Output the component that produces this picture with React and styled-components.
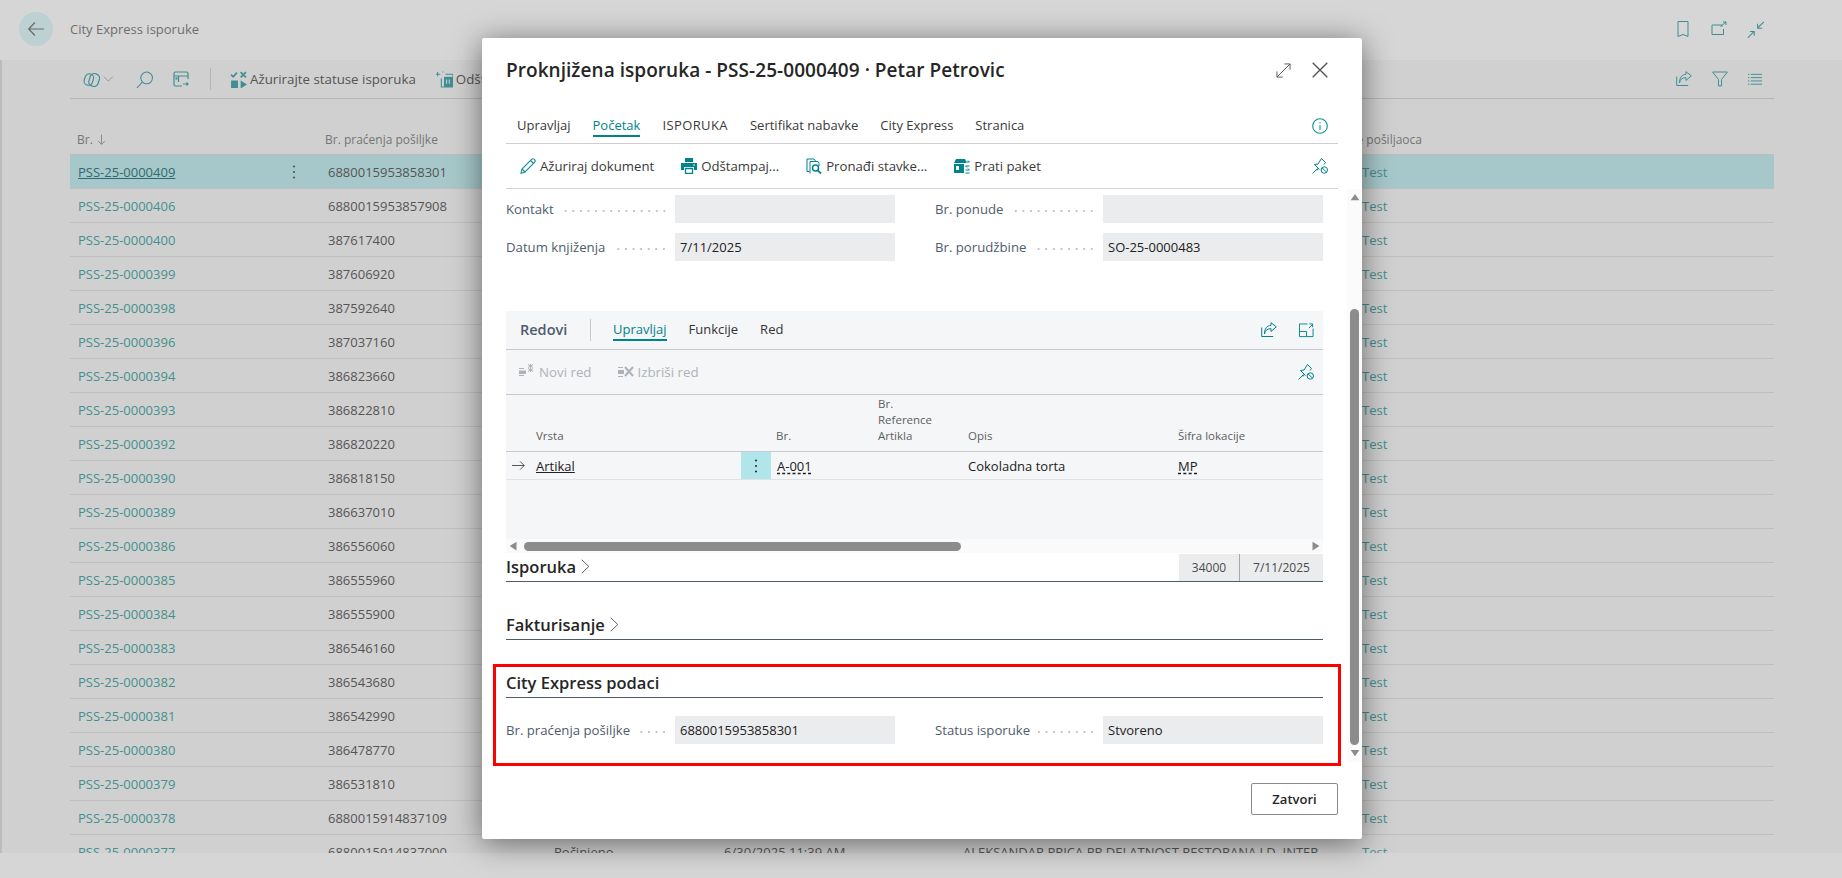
import React from 'react';
import styled, { createGlobalStyle } from 'styled-components';

const GlobalStyle = createGlobalStyle`
  html, body { margin: 0; padding: 0; height: 100%; overflow: hidden; }
  body { font-family: "Open Sans", "Noto Sans", sans-serif; font-size: 13px; color: #212121; }
  * { box-sizing: border-box; }
`;

const rows = [
  ['PSS-25-0000409', '6880015953858301'],
  ['PSS-25-0000406', '6880015953857908'],
  ['PSS-25-0000400', '387617400'],
  ['PSS-25-0000399', '387606920'],
  ['PSS-25-0000398', '387592640'],
  ['PSS-25-0000396', '387037160'],
  ['PSS-25-0000394', '386823660'],
  ['PSS-25-0000393', '386822810'],
  ['PSS-25-0000392', '386820220'],
  ['PSS-25-0000390', '386818150'],
  ['PSS-25-0000389', '386637010'],
  ['PSS-25-0000386', '386556060'],
  ['PSS-25-0000385', '386555960'],
  ['PSS-25-0000384', '386555900'],
  ['PSS-25-0000383', '386546160'],
  ['PSS-25-0000382', '386543680'],
  ['PSS-25-0000381', '386542990'],
  ['PSS-25-0000380', '386478770'],
  ['PSS-25-0000379', '386531810'],
  ['PSS-25-0000378', '6880015914837109'],
  ['PSS-25-0000377', '6880015914837000', 'Počinjeno', '6/30/2025 11:39 AM', 'ALEKSANDAR PRICA PR DELATNOST RESTORANA LD. INTER'],
];

const Page = styled.div`
  position: relative;
  width: 1842px;
  height: 878px;
  display: flex;
  flex-direction: column;
  background: #d0d0d0;
  overflow: hidden;
`;

const TopBar = styled.header`
  height: 60px;
  flex: none;
  background: #d6d6d6;
  display: flex;
  align-items: center;
  padding: 0 78px 2px 19px;
`;

const BackButton = styled.div`
  width: 34px;
  height: 34px;
  border-radius: 50%;
  background: #bdd0d2;
  display: flex;
  align-items: center;
  justify-content: center;
`;

const PageTitle = styled.div`
  margin-left: 17px;
  font-size: 13px;
  color: #6f6f6f;
  flex: 1;
`;

const IconRow = styled.div`
  display: flex;
  align-items: center;
  gap: ${p => p.$gap || 20}px;
`;

const Main = styled.div`
  flex: 1;
  min-height: 0;
  border-left: 2px solid #bcbcbc;
  padding: 0 68px;
  overflow: hidden;
`;

const ListToolbar = styled.div`
  height: 39px;
  display: flex;
  align-items: center;
  border-bottom: 1px solid #b5b5b5;
  padding: 0 11px 0 13px;
`;

const ToolItem = styled.div`
  display: flex;
  align-items: center;
  gap: 3px;
  font-size: 13.3px;
  color: #555;
  margin-left: ${p => p.$ml || 0}px;
  margin-right: ${p => p.$mr || 0}px;
  white-space: nowrap;
`;

const ToolSep = styled.div`
  width: 1px;
  height: 22px;
  background: #b5b5b5;
  margin: 0 19px 0 21px;
`;

const Spacer = styled.div`
  flex: 1;
`;

const ListGrid = styled.div`
  display: grid;
  grid-template-columns: 195px 56px 226px 170px 239px 398px 420px;
`;

const ListHead = styled(ListGrid)`
  height: 56px;
  align-items: end;
  border-bottom: 1px solid #bcbcbc;
  padding-bottom: 6px;
  font-size: 12px;
  color: #757575;
`;

const HeadCell = styled.div`
  padding-left: ${p => p.$pl ?? 7}px;
  margin-left: ${p => p.$ml || 0}px;
  white-space: nowrap;
  display: flex;
  align-items: center;
  gap: 3px;
`;

const ListRow = styled(ListGrid)`
  height: 34px;
  align-items: center;
  border-bottom: 1px solid #bfbfbf;
  background: ${p => (p.$selected ? '#a7c8ca' : 'transparent')};
  font-size: 13px;
  color: #555;
`;

const Cell = styled.div`
  padding-left: 7px;
  white-space: nowrap;
`;

const DocLink = styled.div`
  padding-left: 8px;
  white-space: nowrap;
  color: ${p => (p.$selected ? '#2e6b70' : '#43908f')};
  text-decoration: ${p => (p.$selected ? 'underline' : 'none')};
`;

const DotsCell = styled(Cell)`
  padding-left: 27px;
  display: flex;
  align-items: center;
`;

const BottomBar = styled.div`
  height: 25px;
  flex: none;
  background: #d6d6d6;
`;

const Modal = styled.section`
  position: absolute;
  left: 482px;
  top: 38px;
  width: 880px;
  height: 801px;
  background: #fff;
  border-radius: 2px;
  box-shadow: 0 4px 30px rgba(0, 0, 0, 0.5);
  display: flex;
  flex-direction: column;
`;

const ModalHead = styled.div`
  height: 70px;
  flex: none;
  display: flex;
  align-items: center;
  padding: 0 34px 6px 24px;
`;

const ModalTitle = styled.h1`
  flex: 1;
  margin: 0;
  font-size: 19px;
  letter-spacing: 0.05px;
  font-weight: 600;
  color: #262626;
`;

const TabBar = styled.div`
  height: 36px;
  flex: none;
  margin: 0 24px;
  padding: 0 10px 0 11px;
  border-bottom: 1px solid #cfcfd3;
  display: flex;
  align-items: center;
  gap: 22px;
  font-size: 13px;
  color: #3a3a3a;
`;

const Tab = styled.div`
  height: 22px;
  line-height: 20px;
  white-space: nowrap;
  color: ${p => (p.$active ? '#00838a' : 'inherit')};
  border-bottom: 2px solid ${p => (p.$active ? '#00838a' : 'transparent')};
`;

const CapsTab = styled(Tab)`
  letter-spacing: 0.4px;
`;

const ActionBar = styled.div`
  height: 45px;
  flex: none;
  margin: 0 24px;
  padding: 0 10px 0 14px;
  border-bottom: 1px solid #d4d4d8;
  display: flex;
  align-items: center;
  gap: 27px;
  font-size: 13.2px;
  color: #3a3a3a;
`;

const Action = styled.div`
  display: flex;
  align-items: center;
  gap: 4px;
  white-space: nowrap;
  color: ${p => (p.$disabled ? '#aeb2b8' : 'inherit')};
`;

const ScrollArea = styled.div`
  flex: 1;
  min-height: 0;
  display: flex;
  padding-left: 24px;
`;

const Content = styled.div`
  width: 817px;
  flex: none;
`;

const FieldGrid = styled.div`
  display: grid;
  grid-template-columns: 389px 388px;
  column-gap: 40px;
  row-gap: 10px;
  padding-top: ${p => p.$top || 0}px;
`;

const Field = styled.div`
  display: flex;
  align-items: center;
  height: 28px;
`;

const FieldLabel = styled.div`
  flex: 1;
  display: flex;
  align-items: center;
  font-size: 13.2px;
  color: #505c6d;
  white-space: nowrap;
  padding-right: 7px;
`;

const Leader = styled.span`
  flex: 1;
  height: 2px;
  margin: 3px 0 0 8px;
  background: radial-gradient(circle, #c4c4c4 0.9px, transparent 1px) right center / 7.6px 2px repeat-x;
`;

const FieldValue = styled.div`
  width: 220px;
  flex: none;
  height: 100%;
  background: #ebecee;
  padding: 0 5px;
  display: flex;
  align-items: center;
  font-size: 13px;
  color: #212121;
`;

const LinesPart = styled.div`
  margin-top: 50px;
  background: #f5f6f8;
`;

const LinesHead = styled.div`
  height: 39px;
  border-bottom: 1px solid #c8c9cc;
  display: flex;
  align-items: center;
  padding: 0 9px 0 14px;
  gap: 22px;
  font-size: 13px;
  color: #333;
`;

const LinesTitle = styled.div`
  font-size: 14.5px;
  font-weight: 600;
  color: #505c6d;
  height: 22px;
  line-height: 22px;
  border-right: 1px solid #c8c9cc;
  width: 71px;
  flex: none;
  white-space: nowrap;
`;

const LinesActions = styled.div`
  height: 45px;
  border-bottom: 1px solid #c8c9cc;
  display: flex;
  align-items: center;
  padding: 0 9px 0 13px;
  gap: 26px;
  font-size: 13.3px;
`;

const LinesGrid = styled.div`
  display: grid;
  grid-template-columns: 30px 205px 30px 107px 90px 210px 145px;
`;

const LinesGridHead = styled(LinesGrid)`
  height: 57px;
  align-items: end;
  border-bottom: 1px solid #c8c9cc;
  font-size: 11.5px;
  line-height: 16px;
  color: #5e5e5e;
  padding-bottom: 7px;
`;

const LinesRow = styled(LinesGrid)`
  height: 28px;
  align-items: center;
  border-bottom: 1px solid #e1e2e5;
  font-size: 13px;
  color: #212121;
`;

const LineCell = styled.div`
  white-space: nowrap;
  padding-left: ${p => p.$pl || 0}px;
  text-decoration: ${p => (p.$link ? 'underline' : 'none')};
`;

const Lookup = styled.span`
  text-decoration: underline dashed;
  text-underline-offset: 2px;
`;

const MenuCell = styled.div`
  height: 27px;
  background: #b0e6ea;
  display: flex;
  align-items: center;
  justify-content: center;
`;

const LinesFiller = styled.div`
  height: 59px;
`;

const HScroll = styled.div`
  height: 14px;
  background: #fafafa;
  display: flex;
  align-items: center;
  padding: 0 3px;
`;

const HThumb = styled.div`
  width: 437px;
  height: 9px;
  border-radius: 5px;
  background: #8c8c8c;
  margin-right: auto;
  margin-left: 5px;
`;

const SectionHead = styled.div`
  display: flex;
  align-items: flex-end;
  height: ${p => p.$h || 28}px;
  border-bottom: 1px solid #4f5a6b;
  justify-content: space-between;
`;

const SectionTitle = styled.div`
  display: flex;
  align-items: center;
  gap: 2px;
  font-size: 16.5px;
  font-weight: 600;
  color: #262626;
  white-space: nowrap;
  padding-bottom: 3px;
`;

const CutCells = styled.div`
  display: flex;
  height: 27px;
`;

const CutCell = styled.div`
  background: #ebecee;
  height: 100%;
  width: ${p => p.$w}px;
  display: flex;
  align-items: center;
  justify-content: center;
  font-size: 12px;
  color: #4a4a4a;
  border-left: ${p => (p.$line ? '1px solid #a8a8a8' : '0')};
`;

const CitySection = styled.div`
  position: relative;
  margin-top: 25px;
`;

const Highlight = styled.div`
  position: absolute;
  left: -13px;
  right: -18px;
  top: -1px;
  height: 102px;
  border: 3px solid #f00;
  pointer-events: none;
`;

const ScrollTrack = styled.div`
  width: 15px;
  flex: none;
  margin-left: 24px;
  background: #fbfbfb;
  display: flex;
  flex-direction: column;
  align-items: center;
  padding: 3px 0 4px;
`;

const VThumb = styled.div`
  width: 9px;
  flex: 1;
  margin: 107px 0 3px;
  border-radius: 5px;
  background: #8c8c8c;
`;

const ModalFoot = styled.div`
  flex: none;
  height: 77px;
  display: flex;
  justify-content: flex-end;
  padding: 21px 24px 0 0;
`;

const CloseButton = styled.button`
  width: 87px;
  height: 32px;
  background: #fff;
  border: 1px solid #8a8a8a;
  border-radius: 2px;
  font-family: inherit;
  font-size: 13px;
  font-weight: 600;
  color: #262626;
  padding: 0;
`;

const Svg = styled.svg.attrs(p => ({
  viewBox: p.viewBox || '0 0 16 16',
  width: p.$width || p.$s || 16,
  height: p.$s || 16,
  fill: 'none',
  stroke: p.$c || '#00838a',
  strokeWidth: p.$w || 1,
}))`
  flex: none;
  display: block;
`;

const dim = '#3f8f92';

const ArrowLeftIcon = () => (
  <Svg $c="#6a6a6a" $s={18} $w={1.1}>
    <path d="M1.5 8H15M7 2.2 1.5 8 7 13.8" />
  </Svg>
);
const BookmarkIcon = () => (
  <Svg $c={dim}><path d="M3 .5h10v15L8 13.5l-5 2z" /></Svg>
);
const OpenIcon = () => (
  <Svg $c={dim}><path d="M11 5.5V4H1v9.5h11.5V8M9.5 5.5 15 1M12 1h3v3" /></Svg>
);
const CollapseIcon = () => (
  <Svg $c={dim} $s={17}><path d="M9.8 6.8 15.8.8M10 2.6v4.2h4.2M.8 15.8l6-6M2.8 9.8h4v4" /></Svg>
);
const ShareIcon = ({ c = dim }) => (
  <Svg $c={c}><path d="M.7 5.5v9h11.5M3.5 12c.4-3.5 3-5.500 6.500-5.300V9.500l5.300-4.700L10 .7v2.600C6 3.300 3.300 7 3.500 12z" /></Svg>
);
const FilterIcon = () => (
  <Svg $c={dim}><path d="M.6 1h14.800L9.500 8.500V15h-3V8.500z" /></Svg>
);
const ListIcon = () => (
  <Svg $c={dim} $s={15}><path d="M0 2.5h1.5M3 2.5h12M0 6h1.5M3 6h12M0 9.5h1.5M3 9.5h12M0 13h1.5M3 13h12" /></Svg>
);
const CopilotIcon = () => (
  <Svg $c={dim} $s={17} $w={1.1}>
    <rect x="1.5" y="2.5" width="8" height="11" rx="4" transform="rotate(18 5.5 8)" />
    <rect x="6" y="2.5" width="9" height="12" rx="4" transform="rotate(18 10.5 8.5)" />
  </Svg>
);
const ChevronDown = () => (
  <Svg $c="#8a8a8a" $s={13}><path d="M1 4.5 6.5 10 12 4.5" /></Svg>
);
const SearchIcon = () => (
  <Svg $c={dim} $s={17}><circle cx="10" cy="6.5" r="5.5" /><path d="M6 10.5.8 16" /></Svg>
);
const LayoutIcon = () => (
  <Svg $c={dim} $w={1.2}>
    <path d="M9 15H2.500A1.500 1.500 0 0 1 1 13.500v-11A1.500 1.500 0 0 1 2.500 1h11A1.500 1.500 0 0 1 15 2.500V8" />
    <path d="M1 5h14M5.5 5v6" />
    <path d="M2.500 6.500h2v2h-2z" fill={dim} stroke="none" />
    <path d="M10 13h5M13.5 11.500 15 13l-1.500 1.500" />
  </Svg>
);
const UpdateIcon = () => (
  <Svg $c={dim} $s={17}>
    <path d="M1 3.500 3 5.500 6.500 1.500" strokeWidth="1.6" />
    <path d="M10 1l5 5M15 1l-5 5" strokeWidth="1.6" />
    <path d="M1 9h6.500v7.500H1zM10 9l6 3.700-6 3.800z" fill={dim} stroke="none" />
  </Svg>
);
const ExportListIcon = () => (
  <Svg $c={dim} $s={17}>
    <path d="M0 3h4M1.500 1v4M6 1h1M9 3h7v12H5V7" />
    <path d="M7.500 5.500h8.500V15H7.500z" fill={dim} stroke="none" />
    <path d="M10 8v4M12.500 8v4" stroke="#d0d0d0" />
  </Svg>
);
const VDots = ({ c = '#555' }) => (
  <Svg viewBox="0 0 4 16" $width={4} $c="none">
    <circle cx="2" cy="2.5" r="1.1" fill={c} />
    <circle cx="2" cy="8" r="1.1" fill={c} />
    <circle cx="2" cy="13.5" r="1.1" fill={c} />
  </Svg>
);
const SortDown = () => (
  <Svg $c="#757575" $s={11} $w={1.1}><path d="M8 1v14M3 10l5 5 5-5" /></Svg>
);
const ExpandIcon = () => (
  <Svg $c="#555" $s={15}><path d="M1 15 15 1M9 1h6v6M1 9v6h6" /></Svg>
);
const CloseIcon = () => (
  <Svg $c="#555" $w={1.4}><path d="M.7.7 15.300 15.300M15.300.7.7 15.300" /></Svg>
);
const InfoIcon = () => (
  <Svg $c="#138f96" $w={1.1}>
    <circle cx="8" cy="8" r="7.3" />
    <path d="M8 7v5" />
    <circle cx="8" cy="4.8" r=".7" fill="#138f96" stroke="none" />
  </Svg>
);
const PinIcon = () => (
  <Svg>
    <path d="M.5 15.500 5.500 10.500M2.500 6.500l3.500-.5 3.500-5.500 4 4L12 6.500M2.500 6.500l5 5M5 12.500l1.300-2" />
    <circle cx="12.300" cy="12" r="3.200" />
    <path d="M10 9.800l4.600 4.400" />
  </Svg>
);
const PencilIcon = () => (
  <Svg $c="#138f96" $w={1.1}>
    <path d="M1 15.300 2 11 11.800 1.200a1.500 1.500 0 0 1 2.200 0l.8.8a1.500 1.500 0 0 1 0 2.200L5 14z" />
    <path d="M2 11l3 3M10.500 2.500l3 3" />
  </Svg>
);
const PrinterIcon = () => (
  <Svg $c="none">
    <path d="M4 0h8v4H4zM0 5h16v7h-3V9H3v3H0z" fill="#00838a" />
    <path d="M4.500 10.500h7v5h-7z" stroke="#00838a" strokeWidth="1.3" />
    <circle cx="13" cy="7" r=".8" fill="#fff" />
  </Svg>
);
const FindDocIcon = () => (
  <Svg>
    <path d="M3.500 13.500H1V1h7l1.500 2M4 15.500V3.500h8l1 1.500v3" />
    <circle cx="9.500" cy="10" r="3" strokeWidth="1.5" />
    <path d="M11.500 12.300 15 15.500" strokeWidth="1.8" />
  </Svg>
);
const PackageIcon = () => (
  <Svg>
    <path d="M0 5 2 1h9l1 2v2zM0 6h10v9H0z" fill="#00838a" stroke="none" />
    <path d="M2 8h3v4H2z" fill="#fff" stroke="none" />
    <path d="M11.500 4h4l-1.500-1.500M11.500 8h4M11.500 8l1.500 1.500M11.500 12h4l-1.500-1.500M11.500 15h4" />
  </Svg>
);
const NewLineIcon = () => (
  <Svg $c="#aeb2b8">
    <path d="M0 4.500h5M0 11.500h5" />
    <path d="M0 6.500h7V10H0z" fill="#aeb2b8" stroke="none" />
    <path d="M9 3.500l5-3M9 .5l5 3M11.500 0v4M9 7.500l5-3M9 4.500l5 3M11.500 4v4" />
  </Svg>
);
const DeleteLineIcon = () => (
  <Svg $c="#aeb2b8">
    <path d="M0 3.500h5M0 12.500h5" />
    <path d="M0 6h6v4H0z" fill="#aeb2b8" stroke="none" />
    <path d="M7 3l8 9M15 3l-8 9" strokeWidth="2" />
  </Svg>
);
const PopOutIcon = () => (
  <Svg $s={15}>
    <path d="M15 6v8.500H.5V1H9M.5 9H8v5.500M10.500 5.500 14.500 1.500M11 1h3.500v3.500" />
  </Svg>
);
const ArrowRightIcon = () => (
  <Svg $c="#333" $s={13}><path d="M0 8h15M10 3l5 5-5 5" /></Svg>
);
const SectionChevron = () => (
  <Svg $c="#555" $s={15}><path d="M4 .8 11.500 8 4 15.200" /></Svg>
);
const TriLeft = () => <Svg $c="none" $s={10}><path d="M12 1v14L1 8z" fill="#8c8c8c" /></Svg>;
const TriRight = () => <Svg $c="none" $s={10}><path d="M4 1v14l11-7z" fill="#8c8c8c" /></Svg>;
const TriUp = () => <Svg $c="none" $s={10}><path d="M1 13 8 3l7 10z" fill="#8c8c8c" /></Svg>;
const TriDown = () => <Svg $c="none" $s={10}><path d="M1 3h14L8 13z" fill="#8c8c8c" /></Svg>;

const DataField = ({ label, value }) => (
  <Field>
    <FieldLabel>{label}<Leader /></FieldLabel>
    <FieldValue>{value}</FieldValue>
  </Field>
);

const App = () => (
  <Page>
    <GlobalStyle />
    <TopBar>
      <BackButton><ArrowLeftIcon /></BackButton>
      <PageTitle>City Express isporuke</PageTitle>
      <IconRow>
        <BookmarkIcon />
        <OpenIcon />
        <CollapseIcon />
      </IconRow>
    </TopBar>
    <Main>
      <ListToolbar>
        <CopilotIcon />
        <ToolItem $ml={3}><ChevronDown /></ToolItem>
        <ToolItem $ml={20} $mr={20}><SearchIcon /></ToolItem>
        <LayoutIcon />
        <ToolSep />
        <ToolItem $mr={20}><UpdateIcon />Ažurirajte statuse isporuka</ToolItem>
        <ToolItem><ExportListIcon />Odštampaj</ToolItem>
        <Spacer />
        <IconRow>
          <ShareIcon />
          <FilterIcon />
          <ListIcon />
        </IconRow>
      </ListToolbar>
      <ListHead>
        <HeadCell>Br. <SortDown /></HeadCell>
        <HeadCell />
        <HeadCell $pl={4}>Br. praćenja pošiljke</HeadCell>
        <HeadCell />
        <HeadCell />
        <HeadCell />
        <HeadCell $ml={-19}>Ime pošiljaoca</HeadCell>
      </ListHead>
      {rows.map(([no, track, status, date, name], i) => (
        <ListRow key={no} $selected={i === 0}>
          <DocLink $selected={i === 0}>{no}</DocLink>
          {i === 0 ? <DotsCell><VDots /></DotsCell> : <Cell />}
          <Cell>{track}</Cell>
          <Cell>{status}</Cell>
          <Cell>{date}</Cell>
          <Cell>{name}</Cell>
          <DocLink>Test</DocLink>
        </ListRow>
      ))}
    </Main>
    <BottomBar />

    <Modal>
      <ModalHead>
        <ModalTitle>Proknjižena isporuka - PSS-25-0000409 · Petar Petrovic</ModalTitle>
        <IconRow $gap={21}>
          <ExpandIcon />
          <CloseIcon />
        </IconRow>
      </ModalHead>
      <TabBar>
        <Tab>Upravljaj</Tab>
        <Tab $active>Početak</Tab>
        <CapsTab>ISPORUKA</CapsTab>
        <Tab>Sertifikat nabavke</Tab>
        <Tab>City Express</Tab>
        <Tab>Stranica</Tab>
        <Spacer />
        <InfoIcon />
      </TabBar>
      <ActionBar>
        <Action><PencilIcon />Ažuriraj dokument</Action>
        <Action><PrinterIcon />Odštampaj...</Action>
        <Action><FindDocIcon />Pronađi stavke...</Action>
        <Action><PackageIcon />Prati paket</Action>
        <Spacer />
        <PinIcon />
      </ActionBar>
      <ScrollArea>
        <Content>
          <FieldGrid $top={6}>
            <DataField label="Kontakt" value="" />
            <DataField label="Br. ponude" value="" />
            <DataField label="Datum knjiženja" value="7/11/2025" />
            <DataField label="Br. porudžbine" value="SO-25-0000483" />
          </FieldGrid>
          <LinesPart>
            <LinesHead>
              <LinesTitle>Redovi</LinesTitle>
              <Tab $active>Upravljaj</Tab>
              <Tab>Funkcije</Tab>
              <Tab>Red</Tab>
              <Spacer />
              <ShareIcon c="#00838a" />
              <PopOutIcon />
            </LinesHead>
            <LinesActions>
              <Action $disabled><NewLineIcon />Novi red</Action>
              <Action $disabled><DeleteLineIcon />Izbriši red</Action>
              <Spacer />
              <PinIcon />
            </LinesActions>
            <LinesGridHead>
              <div />
              <LineCell>Vrsta</LineCell>
              <div />
              <LineCell $pl={5}>Br.</LineCell>
              <LineCell>Br.<br />Reference<br />Artikla</LineCell>
              <LineCell>Opis</LineCell>
              <LineCell>Šifra lokacije</LineCell>
            </LinesGridHead>
            <LinesRow>
              <LineCell $pl={6}><ArrowRightIcon /></LineCell>
              <LineCell $link>Artikal</LineCell>
              <MenuCell><VDots c="#333" /></MenuCell>
              <LineCell $pl={6}><Lookup>A-001</Lookup></LineCell>
              <div />
              <LineCell>Cokoladna torta</LineCell>
              <LineCell><Lookup>MP</Lookup></LineCell>
            </LinesRow>
            <LinesFiller />
          </LinesPart>
          <HScroll>
            <TriLeft />
            <HThumb />
            <TriRight />
          </HScroll>
          <SectionHead $h={29}>
            <SectionTitle>Isporuka<SectionChevron /></SectionTitle>
            <CutCells>
              <CutCell $w={60}>34000</CutCell>
              <CutCell $w={84} $line>7/11/2025</CutCell>
            </CutCells>
          </SectionHead>
          <SectionHead $h={58}>
            <SectionTitle>Fakturisanje<SectionChevron /></SectionTitle>
          </SectionHead>
          <CitySection>
            <SectionHead $h={33}>
              <SectionTitle>City Express podaci</SectionTitle>
            </SectionHead>
            <FieldGrid $top={18}>
              <DataField label="Br. praćenja pošiljke" value="6880015953858301" />
              <DataField label="Status isporuke" value="Stvoreno" />
            </FieldGrid>
            <Highlight />
          </CitySection>
        </Content>
        <ScrollTrack>
          <TriUp />
          <VThumb />
          <TriDown />
        </ScrollTrack>
      </ScrollArea>
      <ModalFoot>
        <CloseButton>Zatvori</CloseButton>
      </ModalFoot>
    </Modal>
  </Page>
);

export default App;
